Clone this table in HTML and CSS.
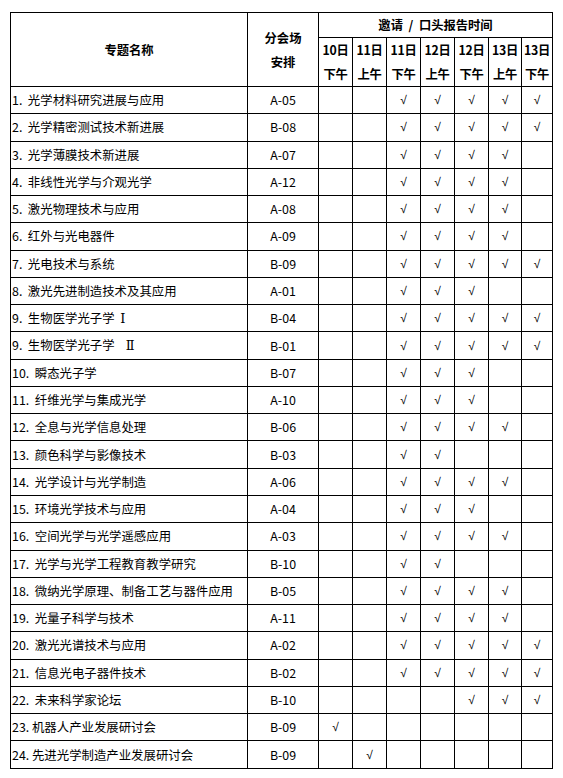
FILE: index.html
```html
<!DOCTYPE html>
<html lang="zh-CN">
<head>
<meta charset="utf-8">
<title>专题安排</title>
<link rel="stylesheet" href="styles.css">
</head>
<body>
<table class="sched">
<colgroup>
<col class="c-name"><col class="c-room">
<col class="c-day"><col class="c-day"><col class="c-day"><col class="c-day"><col class="c-day"><col class="c-day6"><col class="c-day7">
</colgroup>
<thead>
<tr class="h1">
<th rowspan="2" class="th-name">专题名称</th>
<th rowspan="2" class="th-room">分会场<br>安排</th>
<th colspan="7" class="th-time">邀请&nbsp; /&nbsp; 口头报告时间</th>
</tr>
<tr class="h2">
<th class="th-day">10日<br>下午</th>
<th class="th-day">11日<br>上午</th>
<th class="th-day">11日<br>下午</th>
<th class="th-day">12日<br>上午</th>
<th class="th-day">12日<br>下午</th>
<th class="th-day">13日<br>上午</th>
<th class="th-day">13日<br>下午</th>
</tr>
</thead>
<tbody>
<tr><td class="name">1.&nbsp; 光学材料研究进展与应用</td><td class="room">A-05</td><td></td><td></td><td>√</td><td>√</td><td>√</td><td>√</td><td>√</td></tr>
<tr><td class="name">2.&nbsp; 光学精密测试技术新进展</td><td class="room">B-08</td><td></td><td></td><td>√</td><td>√</td><td>√</td><td>√</td><td>√</td></tr>
<tr><td class="name">3.&nbsp; 光学薄膜技术新进展</td><td class="room">A-07</td><td></td><td></td><td>√</td><td>√</td><td>√</td><td>√</td><td></td></tr>
<tr><td class="name">4.&nbsp; 非线性光学与介观光学</td><td class="room">A-12</td><td></td><td></td><td>√</td><td>√</td><td>√</td><td>√</td><td></td></tr>
<tr><td class="name">5.&nbsp; 激光物理技术与应用</td><td class="room">A-08</td><td></td><td></td><td>√</td><td>√</td><td>√</td><td>√</td><td></td></tr>
<tr><td class="name">6.&nbsp; 红外与光电器件</td><td class="room">A-09</td><td></td><td></td><td>√</td><td>√</td><td>√</td><td>√</td><td></td></tr>
<tr><td class="name">7.&nbsp; 光电技术与系统</td><td class="room">B-09</td><td></td><td></td><td>√</td><td>√</td><td>√</td><td>√</td><td>√</td></tr>
<tr><td class="name">8.&nbsp; 激光先进制造技术及其应用</td><td class="room">A-01</td><td></td><td></td><td>√</td><td>√</td><td>√</td><td></td><td></td></tr>
<tr><td class="name">9.&nbsp; 生物医学光子学&nbsp;&nbsp;<span class="roman">Ⅰ</span></td><td class="room">B-04</td><td></td><td></td><td>√</td><td>√</td><td>√</td><td>√</td><td>√</td></tr>
<tr><td class="name">9.&nbsp; 生物医学光子学&nbsp;&nbsp;&nbsp;&nbsp;<span class="roman">Ⅱ</span></td><td class="room">B-01</td><td></td><td></td><td>√</td><td>√</td><td>√</td><td>√</td><td>√</td></tr>
<tr><td class="name">10.&nbsp; 瞬态光子学</td><td class="room">B-07</td><td></td><td></td><td>√</td><td>√</td><td>√</td><td></td><td></td></tr>
<tr><td class="name">11.&nbsp; 纤维光学与集成光学</td><td class="room">A-10</td><td></td><td></td><td>√</td><td>√</td><td>√</td><td></td><td></td></tr>
<tr><td class="name">12.&nbsp; 全息与光学信息处理</td><td class="room">B-06</td><td></td><td></td><td>√</td><td>√</td><td>√</td><td>√</td><td></td></tr>
<tr><td class="name">13.&nbsp; 颜色科学与影像技术</td><td class="room">B-03</td><td></td><td></td><td>√</td><td>√</td><td></td><td></td><td></td></tr>
<tr><td class="name">14.&nbsp; 光学设计与光学制造</td><td class="room">A-06</td><td></td><td></td><td>√</td><td>√</td><td>√</td><td>√</td><td></td></tr>
<tr><td class="name">15.&nbsp; 环境光学技术与应用</td><td class="room">A-04</td><td></td><td></td><td>√</td><td>√</td><td>√</td><td></td><td></td></tr>
<tr><td class="name">16.&nbsp; 空间光学与光学遥感应用</td><td class="room">A-03</td><td></td><td></td><td>√</td><td>√</td><td>√</td><td>√</td><td></td></tr>
<tr><td class="name">17.&nbsp; 光学与光学工程教育教学研究</td><td class="room">B-10</td><td></td><td></td><td>√</td><td>√</td><td></td><td></td><td></td></tr>
<tr><td class="name">18.&nbsp; 微纳光学原理、制备工艺与器件应用</td><td class="room">B-05</td><td></td><td></td><td>√</td><td>√</td><td>√</td><td>√</td><td></td></tr>
<tr><td class="name">19.&nbsp; 光量子科学与技术</td><td class="room">A-11</td><td></td><td></td><td>√</td><td>√</td><td>√</td><td>√</td><td></td></tr>
<tr><td class="name">20.&nbsp; 激光光谱技术与应用</td><td class="room">A-02</td><td></td><td></td><td>√</td><td>√</td><td>√</td><td>√</td><td>√</td></tr>
<tr><td class="name">21.&nbsp; 信息光电子器件技术</td><td class="room">B-02</td><td></td><td></td><td>√</td><td>√</td><td>√</td><td>√</td><td>√</td></tr>
<tr><td class="name">22.&nbsp; 未来科学家论坛</td><td class="room">B-10</td><td></td><td></td><td></td><td></td><td>√</td><td>√</td><td>√</td></tr>
<tr><td class="name">23. 机器人产业发展研讨会</td><td class="room">B-09</td><td>√</td><td></td><td></td><td></td><td></td><td></td><td></td></tr>
<tr><td class="name">24. 先进光学制造产业发展研讨会</td><td class="room">B-09</td><td></td><td>√</td><td></td><td></td><td></td><td></td><td></td></tr>
</tbody>
</table>
</body>
</html>
```
FILE: styles.css
```css
html, body {
  margin: 0;
  padding: 0;
  background: #ffffff;
}
body {
  padding: 12px 0 0 10px;
  font-family: "Noto Sans CJK SC", "Noto Sans", sans-serif;
  color: #000000;
}
.sched {
  border-collapse: collapse;
  table-layout: fixed;
  width: 543px;
  font-size: 12.3px;
}
.c-name { width: 237px; }
.c-room { width: 71px; }
.c-day { width: 34px; }
.c-day6 { width: 33px; }
.c-day7 { width: 31px; }
.sched th, .sched td {
  border: 1px solid #000000;
  padding: 0;
  text-align: center;
  vertical-align: middle;
  line-height: 24px;
  white-space: nowrap;
  overflow: hidden;
}
.sched th {
  font-weight: bold;
  font-size: 12.3px;
}
.h1 { height: 25px; }
.h2 { height: 48px; }
.th-day { letter-spacing: -0.3px; }
.sched tbody tr { height: 27.28px; }
.sched td {
  font-family: "Liberation Sans", "Noto Sans CJK SC", sans-serif;
  font-size: 12px;
}
.sched td.name {
  font-family: "Noto Sans CJK SC", "Noto Sans", sans-serif;
  text-align: left;
  padding-left: 1px;
  font-size: 12.4px;
}
.sched td.room {
  font-family: "Noto Sans CJK SC", "Noto Sans", sans-serif;
  font-size: 12.4px;
}
.roman {
  font-family: "Liberation Serif", "DejaVu Serif", serif;
  font-size: 13px;
}
```
